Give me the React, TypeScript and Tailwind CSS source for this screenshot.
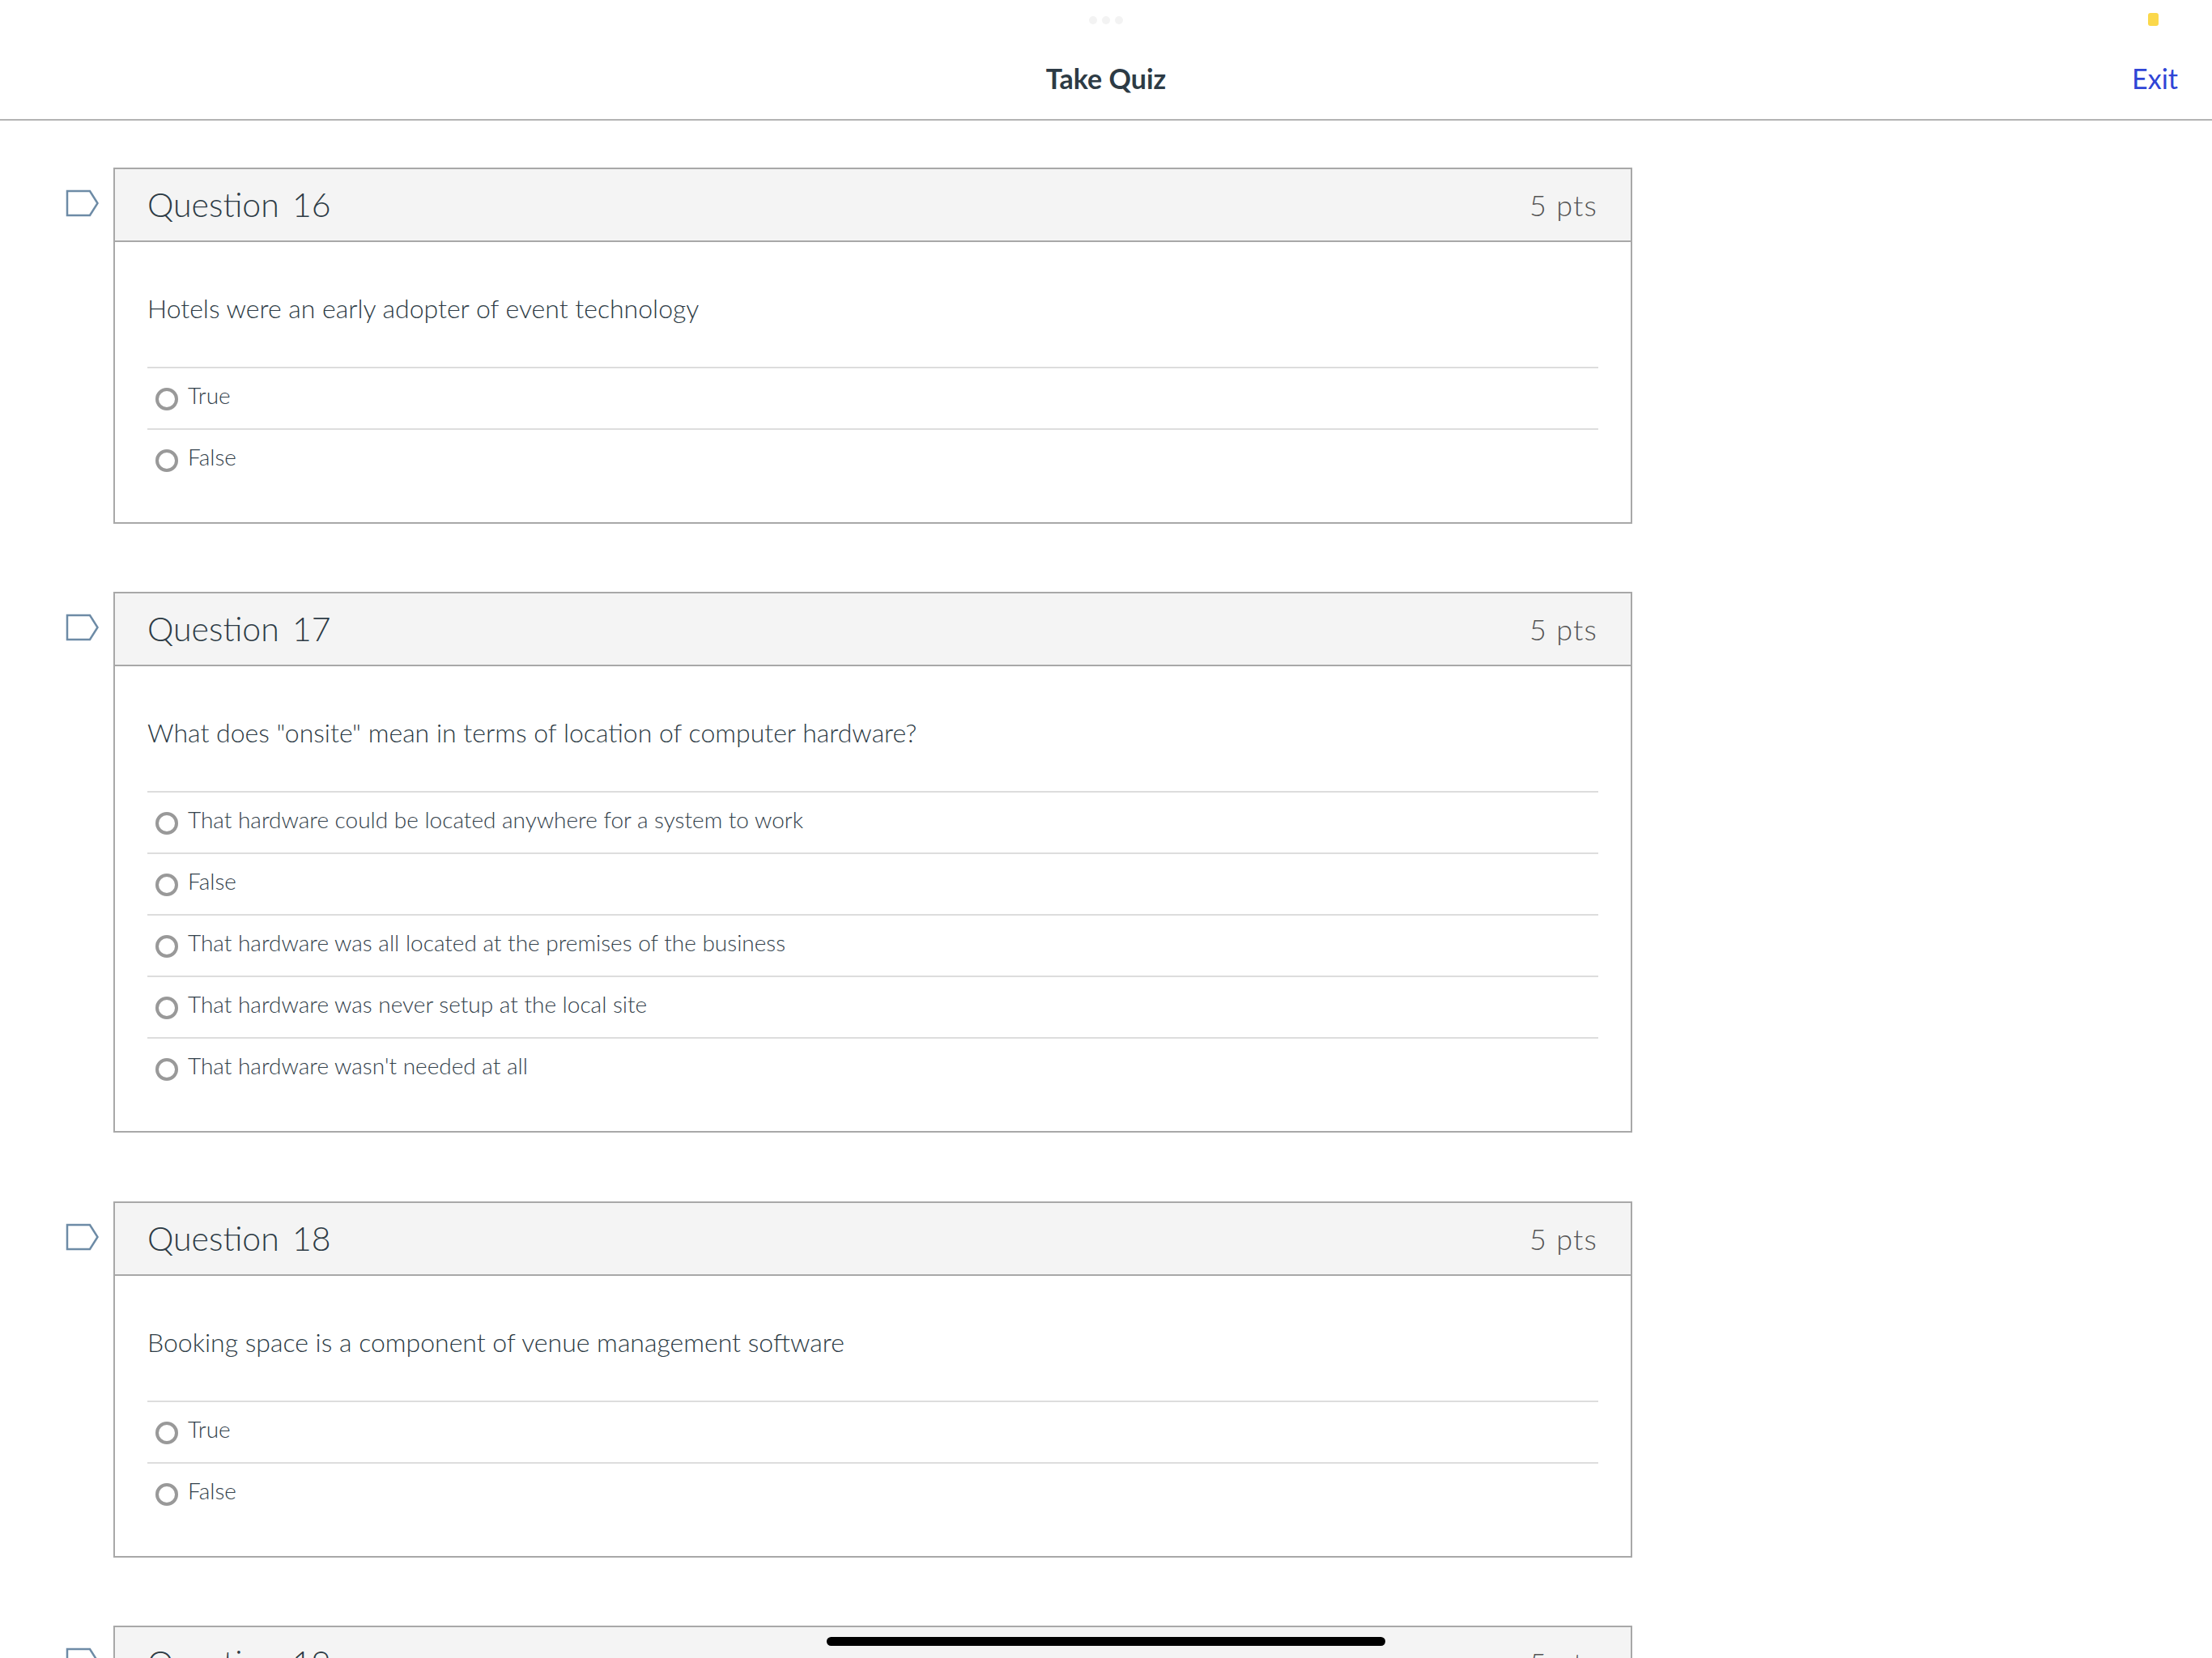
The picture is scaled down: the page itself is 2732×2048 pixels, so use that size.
const questions = [
  { n: 16, text: "Hotels were an early adopter of event technology", options: ["True", "False"], offset: "" },
  {
    n: 17,
    text: 'What does "onsite" mean in terms of location of computer hardware?',
    options: [
      "That hardware could be located anywhere for a system to work",
      "False",
      "That hardware was all located at the premises of the business",
      "That hardware was never setup at the local site",
      "That hardware wasn't needed at all",
    ],
    offset: "",
  },
  { n: 18, text: "Booking space is a component of venue management software", options: ["True", "False"], offset: "mt-px" },
  { n: 19, text: "", options: [], offset: "" },
];

function Flag() {
  return (
    <svg width="42" height="34" viewBox="0 0 42 34" className="shrink-0 mt-[27px] ml-[81px] mr-[17px]">
      <path d="M2 2H30L39.5 17L30 32H2Z" fill="none" stroke="#6d8ba6" strokeWidth="2.5" />
    </svg>
  );
}

export default function App() {
  return (
    <div className="relative w-[2732px] h-[2048px] overflow-hidden bg-white font-['Lato','Liberation_Sans',sans-serif]">
      <header className="relative h-[149px] border-b-2 border-[#b3b3b3] flex items-center justify-center pt-[46px]">
        <div className="absolute top-[20px] left-[1345px] flex gap-[6px]">
          <span className="w-[10px] h-[10px] rounded-full bg-[#f3f3f3]" />
          <span className="w-[10px] h-[10px] rounded-full bg-[#f3f3f3]" />
          <span className="w-[10px] h-[10px] rounded-full bg-[#f3f3f3]" />
        </div>
        <span className="absolute top-[16px] left-[2653px] w-[13px] h-[16px] rounded-[3px] bg-[#fbd84b]" />
        <span className="text-[34px] leading-[44px] font-bold text-[#2d3b45]">Take Quiz</span>
        <span className="absolute right-[42px] top-[75px] text-[34px] leading-[44px] text-[#2f45d6]">Exit</span>
      </header>
      <main className="pt-[58px] flex flex-col gap-[84px]">
        {questions.map((q) => (
          <div key={q.n} className={`flex items-start ${q.offset}`}>
            <Flag />
            <section className="w-[1876px] shrink-0 border-2 border-[#a8a8a8]">
              <div className="h-[90px] bg-[#f4f4f4] border-b-2 border-[#a8a8a8] flex items-center justify-between pl-[40px] pr-[41px]">
                <h2 className="text-[41px] font-light [word-spacing:5px] text-[#2d3b45]">Question {q.n}</h2>
                <span className="text-[36px] font-light tracking-[1.2px] text-[#555]">5 pts</span>
              </div>
              {q.options.length > 0 && (
                <div className="px-[40px] pb-[40px]">
                  <p className="pt-[62px] h-[154px] text-[32px] leading-[40px] font-light text-[#2d3b45]">{q.text}</p>
                  {q.options.map((o) => (
                    <div key={o} className="h-[76px] border-t-2 border-[#dddddd] flex items-start pl-[10px]">
                      <span className="mt-[24px] w-[28px] h-[28px] rounded-full border-[4px] border-[#999999] shrink-0" />
                      <span className="ml-[12px] mt-[15px] text-[28px] leading-[36px] font-light text-[#33414b]">{o}</span>
                    </div>
                  ))}
                </div>
              )}
            </section>
          </div>
        ))}
      </main>
      <div className="absolute left-[1021px] top-[2022px] w-[690px] h-[11px] rounded-full bg-black" />
    </div>
  );
}
